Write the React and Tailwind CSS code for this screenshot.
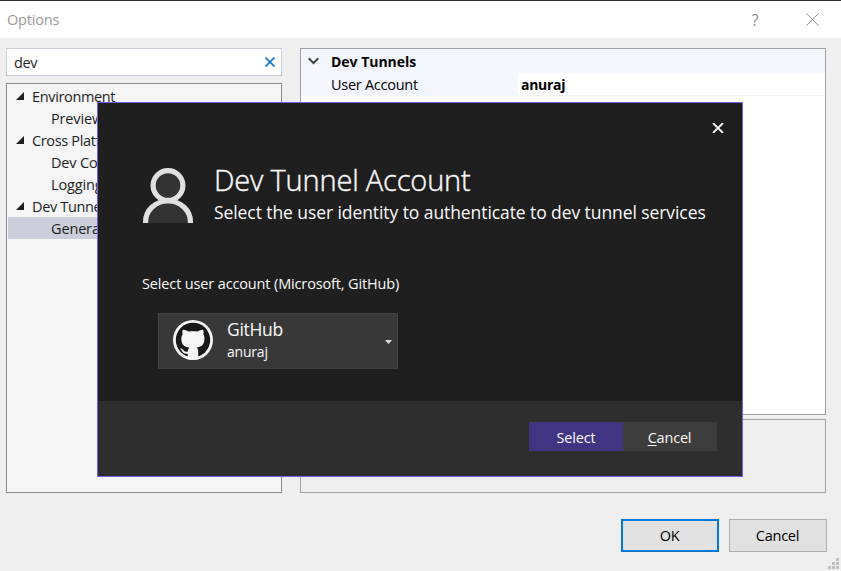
import { Fragment } from "react";

const tree = [
  { label: "Environment", children: ["Preview Features"] },
  { label: "Cross Platform", children: ["Dev Container", "Logging"] },
  { label: "Dev Tunnels", children: ["General"] },
];

function TitleBar() {
  return (
    <header className="flex h-[38px] items-center border-t border-[#333] bg-white pl-[7px] pr-[22px] text-[#999]">
      <span className="flex-1 text-[14.5px] tracking-[-0.2px]">Options</span>
      <span className="mr-[47px] w-2 text-center text-[16px] text-[#8c8c8c]">?</span>
      <svg className="size-[13px]" viewBox="0 0 13 13" stroke="#8c8c8c" fill="none">
        <path d="M.5 .5l12 12M12.5 .5l-12 12" />
      </svg>
    </header>
  );
}

function Tree() {
  return (
    <nav className="mt-[7px] flex-1 border border-[#828790] bg-[#f5f5f5] p-px text-[#1e1e1e]">
      {tree.map((group) => (
        <Fragment key={group.label}>
          <div className="flex h-[22px] items-center pl-[8px]">
            <svg className="mr-2 size-2" viewBox="0 0 8 8">
              <path d="M8 0v8H0z" fill="#1e1e1e" />
            </svg>
            <span className="pt-[2px]">{group.label}</span>
          </div>
          {group.children.map((item) => (
            <div
              key={item}
              className={"flex h-[22px] items-center pl-[43px] pt-[2px] tracking-[-0.15px] " + (item === "General" ? "bg-[#cccedb]" : "")}
            >
              {item}
            </div>
          ))}
        </Fragment>
      ))}
    </nav>
  );
}

function Settings() {
  return (
    <main className="flex w-[526px] flex-col gap-1">
      <section className="h-[367px] border border-[#a0a0a0] bg-white text-black">
        <div className="flex h-6 items-center bg-[#f3f6fc] pl-[7px] font-bold">
          <svg className="mr-[12px] h-[8px] w-[11px]" viewBox="0 0 11 8" fill="none" stroke="#444" strokeWidth="2">
            <path d="M.7 1.2l4.800 4.800 4.800-4.800" />
          </svg>
          <span className="pt-[2px] text-[14px] tracking-[-0.02px]">Dev Tunnels</span>
        </div>
        <div className="flex h-[23px]">
          <div className="flex w-[217px] items-center bg-[#f3f6fc] pl-[30px] tracking-[-0.27px]">User Account</div>
          <div className="flex flex-1 items-center border-b border-[#f3f3f3] pl-[3px] pt-[2px] text-[14px] font-bold tracking-[-0.3px]">
            anuraj
          </div>
        </div>
      </section>
      <section className="h-[74px] border border-[#a0a0a0]" />
    </main>
  );
}

function AccountDialog() {
  return (
    <div className="absolute left-[97px] top-[102px] flex h-[375px] w-[646px] flex-col border border-[#7160e8] bg-[#1f1f1f] text-[#fafafa]">
      <div className="flex h-[64px] justify-end pr-[18px] pt-[20px]">
        <svg className="h-[10px] w-[12px]" viewBox="0 0 12 10" fill="none" stroke="#fafafa" strokeWidth="1.8">
          <path d="M1 0l10 10M11 0L1 10" />
        </svg>
      </div>
      <div className="flex h-[106px] pl-[45px]">
        <svg className="mt-px h-[55px] w-[50px]" viewBox="0 0 50 55" fill="#333" stroke="#e0e0e0" strokeWidth="5.2">
          <path d="M2.6 55V53.500a22.400 20.500 0 0 1 44.800 0V55" />
          <circle cx="25" cy="17.500" r="14.900" />
        </svg>
        <div className="ml-[21px]">
          <h1 className="h-[32px] whitespace-nowrap text-[29px] font-light leading-[26px] tracking-[-0.18px] [-webkit-text-stroke:0.4px_#fafafa]">
            Dev Tunnel Account
          </h1>
          <p className="whitespace-nowrap text-[17.5px] leading-[26px] tracking-[-0.08px]">
            Select the user identity to authenticate to dev tunnel services
          </p>
        </div>
      </div>
      <div className="flex-1 pl-[44px]">
        <p className="h-[40px] leading-[22px] tracking-[-0.14px]">Select user account (Microsoft, GitHub)</p>
        <div className="ml-4 flex h-14 w-[240px] items-center border border-[#434343] bg-[#383838] pl-[14px] pr-[5px]">
          <svg className="mb-[2px] size-10" viewBox="0 0 40 40" fill="#f5f5f5">
            <circle cx="20" cy="20" r="20" />
            <circle cx="20" cy="20" r="17.2" fill="#191717" />
            <path d="M9.800 10c.5-.8 3.600.3 5.700 1.500 2.900-.4 6.100-.4 9 0 2.100-1.200 5.200-2.300 5.700-1.500.6 1.500.5 3 .1 4.300 1.100 1.500 1.400 3.500 1.100 6-.5 4.600-3.300 6.700-7.700 7.300 1 .8 1.500 2 1.500 3.400v8.400h-10.500v-5.700c-3.200.4-4.700-.5-5.700-2.600-.5-1.100-1.400-1.700-2-2.500.9-.5 2.400 0 3.400 1.500 1.200 1.700 2.400 1.900 4.400 1.300.1-1.500.6-2.900 1.400-3.700-4.500-.6-7.300-2.800-7.800-7.400-.3-2.500.2-4.500 1.300-6-.4-1.300-.5-2.800.1-4.300z" />
          </svg>
          <div className="ml-[14px] flex-1">
            <div className="text-[17.5px] leading-[20px] tracking-[-0.3px]">GitHub</div>
            <div className="pt-px text-[14px] leading-[23px] tracking-[-0.2px]">anuraj</div>
          </div>
          <svg className="mt-[2px] h-[4px] w-[7px]" viewBox="0 0 7 4">
            <path d="M0 0h7L3.500 4z" fill="#e0e0e0" />
          </svg>
        </div>
      </div>
      <footer className="flex h-[75px] justify-end bg-[#2e2e2e] pr-[25px] pt-[21px]">
        <button className="h-[29px] w-[94px] bg-[#413482] pt-[2px] tracking-[-0.15px]">Select</button>
        <button className="h-[29px] w-[94px] bg-[#3d3d3d] pr-px pt-[2px] tracking-[-0.2px]">
          <span className="underline underline-offset-2">C</span>ancel
        </button>
      </footer>
    </div>
  );
}

const gripDots = [[8, 0], [4, 4], [8, 4], [0, 8], [4, 8], [8, 8]];

export default function App() {
  return (
    <div className="relative flex h-[571px] w-[841px] flex-col overflow-hidden bg-[#efefef] font-['Open_Sans','Noto_Sans',sans-serif] text-[14.5px] leading-5 tracking-[-0.35px]">
      <TitleBar />
      <div className="mt-[10px] flex h-[445px] gap-[18px] pl-[6px]">
        <aside className="flex w-[276px] flex-col">
          <div className="flex h-7 items-center justify-between border border-[#cccedb] bg-white pl-[7px] pr-[6px] text-[#1e1e1e]">
            <span className="pt-[2px]">dev</span>
            <svg className="size-[10px]" viewBox="0 0 10 10" fill="none" stroke="#1c78c8" strokeWidth="1.8">
              <path d="M.5 .5l9 9M9.500 .5l-9 9" />
            </svg>
          </div>
          <Tree />
        </aside>
        <Settings />
      </div>
      <div className="mt-[26px] flex justify-end gap-[10px] pr-[14px] text-black">
        <button className="h-[33px] w-[98px] border-2 border-[#0078d7] bg-[#e1e1e1] pr-px">OK</button>
        <button className="h-[33px] w-[98px] border border-[#adadad] bg-[#e1e1e1] pr-px tracking-[-0.25px]">Cancel</button>
      </div>
      <AccountDialog />
      <svg className="absolute bottom-[2px] right-[2px] size-[11px]" viewBox="0 0 11 11" fill="#bfbfbf">
        {gripDots.map(([x, y]) => (
          <rect key={x + "-" + y} x={x} y={y} width="3" height="3" />
        ))}
      </svg>
    </div>
  );
}
